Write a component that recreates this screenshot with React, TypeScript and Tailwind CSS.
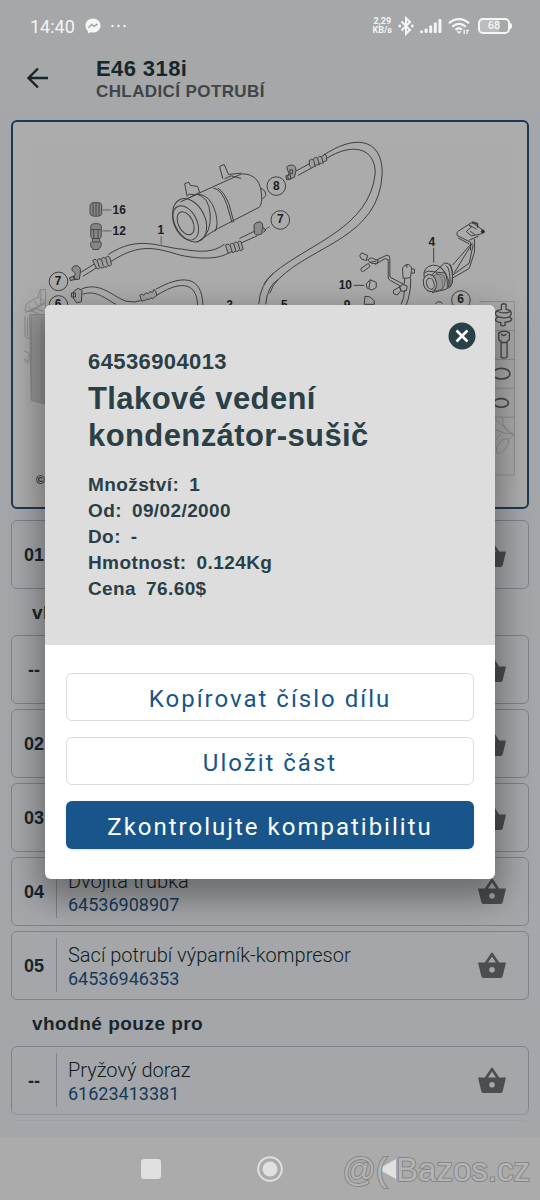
import type { ReactNode } from "react";

const helvetica = "font-['Liberation_Sans',Arial,sans-serif]";

function StatusBar() {
  return (
    <div className="flex h-13 items-center justify-between pl-[30px] pr-7 font-[Roboto,sans-serif] text-[#f4f5f5]">
      <div className="flex items-center gap-2.5">
        <span className="pt-0.5 text-lg leading-6">14:40</span>
        <svg className="h-4 w-4" viewBox="0 0 16 16" aria-hidden="true">
          <path d="M8 .5C3.700.5.5 3.600.5 7.700c0 2.200.9 4 2.400 5.300v2.400l2.300-1.200c.9.300 1.800.4 2.800.4 4.300 0 7.500-3.100 7.500-7.100S12.300.5 8 .5z" fill="currentColor" />
          <path d="M3.500 9.700 6.700 6.300l2.500 2L12.500 6" fill="none" stroke="#a5a7a9" strokeWidth="1.600" />
        </svg>
        <svg className="h-4 w-4" viewBox="0 0 16 16" fill="currentColor" aria-hidden="true">
          <circle cx="1.500" cy="8" r="1.200" />
          <circle cx="7.500" cy="8" r="1.200" />
          <circle cx="13.500" cy="8" r="1.200" />
        </svg>
      </div>
      <div className="flex items-center gap-1.5">
        <div className="text-center text-[9px] leading-[9px] font-bold">
          <div>2,29</div>
          <div>KB/s</div>
        </div>
        <svg className="h-5 w-4" viewBox="0 0 16 20" fill="none" stroke="currentColor" strokeWidth="2" aria-hidden="true">
          <path d="M3.500 5.500 12 14l-4 3.800V2.200L12 6l-8.500 8.500" />
          <circle cx="1.700" cy="10" r="1.400" fill="currentColor" stroke="none" />
          <circle cx="14.300" cy="10" r="1.400" fill="currentColor" stroke="none" />
        </svg>
        <svg className="h-4 w-[22px]" viewBox="0 0 22 16" fill="currentColor" aria-hidden="true">
          <rect x="0" y="12.500" width="3" height="2.500" rx="1" />
          <rect x="4.600" y="10.500" width="3" height="4.500" rx="1" />
          <rect x="9.200" y="7.500" width="3" height="7.500" rx="1" />
          <rect x="13.800" y="4.500" width="3" height="10.500" rx="1" />
          <rect x="18.400" y="1" width="3" height="14" rx="1" />
        </svg>
        <svg className="h-[18px] w-[22px]" viewBox="0 0 22 18" fill="none" stroke="currentColor" strokeWidth="2.300" aria-hidden="true">
          <path d="M1 6.300c5.700-5.600 14.300-5.600 20 0M4.300 9.700c3.900-3.800 9.500-3.800 13.400 0M7.500 13c2-2.100 4.500-2.100 6.500-.5" />
          <path d="M8.500 14.300h5L11 17z" fill="currentColor" stroke="none" />
          <path d="M16.200 12.500v4.500M19 17v-3.500h2" strokeWidth="1.300" />
        </svg>
        <div className="flex items-center pl-0.5">
          <div className="flex h-4 w-8 items-center justify-center rounded-[5px] border-2 border-current bg-linear-to-r from-white/25 from-68% to-transparent to-68% text-[11px] leading-3 font-medium">
            68
          </div>
          <div className="h-1.5 w-0.5 rounded-r-sm bg-current" />
        </div>
      </div>
    </div>
  );
}

function Header() {
  return (
    <header className="flex h-[58px] items-start pl-[26px]">
      <button type="button" aria-label="Zpět" className="mt-3.5 mr-[46px] text-[#17262b]">
        <svg className="h-6 w-6" viewBox="0 0 24 24" fill="none" stroke="currentColor" strokeWidth="2.400" aria-hidden="true">
          <path d="M22 12H3M12 2.500 2.500 12l9.500 9.500" />
        </svg>
      </button>
      <div className={`${helvetica} font-bold tracking-wide`}>
        <h1 className="pt-1 text-[22px] leading-[25px] text-[#17262b]">E46 318i</h1>
        <p className="text-[17px] leading-[22px] text-[#414547]">CHLADICÍ POTRUBÍ</p>
      </div>
    </header>
  );
}

function Diagram() {
  return (
    <svg className="block w-full" viewBox="12 122 516 386" role="img" aria-label="Chladicí potrubí">
      <rect x="24" y="139" width="492" height="355" fill="#ababab" />
      <g transform="translate(0 115) scale(.33333)" fill="none" stroke="#3f3f3f" strokeWidth="3" strokeLinejoin="round">
        <path d="M590 238 725 177q60 0 60 74 0 20-8 27L645 346" />
        <path d="M640 220q25 5 40 50l16 55M652 220q20 10 35 50l14 52" />
        <path d="M590 238q40 0 56 55 10 40-2 58" />
        <ellipse cx="568" cy="317" rx="46" ry="69" transform="rotate(-26 568 317)" />
        <ellipse cx="556" cy="325" rx="34" ry="55" transform="rotate(-26 556 325)" />
        <ellipse cx="556" cy="326" rx="22" ry="37" transform="rotate(-26 556 326)" />
        <path d="M565 250 590 238q36 10 40 60 4 55-30 80M540 262l50-24M590 383l55-37" />
        <path d="M560 243 553 207l12-5 5 10 22 3 6 18-12 8-20-3-6 8M668 192l-10-37 14-6 13 30 38-4M673 192l20-9 30 8" />
        <path d="m782 220 12 8 4 14-12 12" />
        <path d="M323 420C415 360 475 398 545 404c60 10 95 10 128-15M330 442c90-60 140-40 210-20 70 15 125 10 150-10" />
        <path d="M240 474l42-26M246 486l42-26M718 372l45-22M726 384l45-20" />
        <path d="M276 438q8-8 12 0 7-10 13-3 6-10 13-4 7-10 13-3l6 22q-6 8-11 3-4 9-11 4-6 7-12 2-6 8-12 2zM290 438l6 20M302 434l6 21M315 430l6 21M676 392q8-8 12 0 6-10 12-4 6-10 12-4 7-8 11-2l6 22q-8 8-12 2-5 8-12 4-6 8-12 2-6 6-10 2zM690 392l6 20M701 388l6 20M713 384l6 20" fill="#a0a0a0" />
        <path d="M213 466q2-14 16-12 12 4 10 18l-3 22-14 2-4-8 6-10zM206 490l14-5 3 10-14 4zM762 330q8-10 20-8 8 5 6 16l-3 20-14 4-8-6zM788 338l10 8-8 8" fill="#8c8c8c" />
        <path d="M798 342l12-6M482 365v25M305 286h28M305 349h28" strokeWidth="2" />
        <path d="M242 524C300 500 340 550 378 561q25 5 42-2M246 540c40-15 70 15 100 30M466 525c70-40 142-50 142 52M468 544c60-40 122-50 124 30" />
        <path d="M418 543q8-8 12 0 7-12 13-5 6-10 13-4l5-9q6 4 8 18l-6 5q-6 8-12 3-6 8-12 3-6 8-11 4-4 8-6-2zM218 532l14-10 12 6-2 34-14 4-10-14zM212 536h12v12h-12z" fill="#a0a0a0" />
        <path d="M268 273q0-10 18-10t17 10v24q0 8-17 8t-18-8zM277 265v38M286 265v38M295 265v38" fill="#858585" strokeWidth="2.500" />
        <path d="M270 335q0-8 16-8t16 8v28q0 7-5 9v8l5 5v8q-2 8-7 8v4h-19v-4q-6-2-6-8v-8l5-5v-8q-5-2-5-9zM271 345h30M275 372h22M274 382h26M279 345v28M292 345v28" fill="#858585" strokeWidth="2.500" />
        <circle cx="173" cy="501" r="28" />
        <circle cx="173" cy="572" r="28" />
        <circle cx="829" cy="214" r="28" />
        <circle cx="841" cy="316" r="28" />
        <path d="M776 570q4-60 45-94M797 570q5-55 38-75" />
      </g>
      <g transform="translate(270 115) scale(.33333)" fill="none" stroke="#3f3f3f" strokeWidth="3" strokeLinejoin="round">
        <path d="M160 122C250 60 338 65 338 175 330 370 130 390 25 495M168 132C250 80 317 100 317 175 300 340 120 385 11 476" />
        <path d="M76 170l42-23M84 182l42-23" />
        <path d="M118 137q8-7 12-2 6-12 13-5 5-10 12-4l11-9q6 5 5 20l-10 4q-5 8-11 4-6 9-12 5-7 8-13 9l-6-6zM131 135l6 22M143 130l6 21M155 126l6 20" fill="#a0a0a0" />
        <path d="M50 157q5-8 20-6 10 4 8 16l-4 20-18 8-3-9 4-10zM48 183l12-4 4 13-14 3zM60 165h8v12h-8z" fill="#969696" />
        <path d="m270 424 6-9 18 8-4 15-14-4zM294 436l10-6 22 8-4 10-18-2zM300 444l20-4M322 436l30-14q9 0 9 10v56l42 22M316 450l30-17 10 2v55q0 5 8 9l32 18M274 462l22-15 5 9-18 14q-10 5-9-8zM372 528l18-10 5 10-12 14-11-4zM390 518l8-8 15 5-2 14-15 2z" />
        <path d="M400 460q4-10 16-10 12 4 10 18l-3 22-22 2-2-28zM426 464h9v12h-9M406 492l-2 18M424 492q0 48-14 80M405 528q0 22-10 42M412 450v10" />
        <path d="M290 508l12-12 18 8v15l-12 8-16-6zM302 496l-4 26M286 546l16 2 12 12v10h-30zM498 568q12-12 22 0M252 513h32" />
        <path d="M493 400v45" />
        <path d="m550 452 52-60M555 475l55-90M548 492l52-30 16-50v-38" />
        <path d="M604 383 564 363q-5-10 4-14l30-19 24 14M592 352l15 12 30-6 6-10-28-20q-10-8-17 2l8 8-14 12zM603 350l14 10M600 377l28-12M604 384v24M566 370l34 18M550 482l50-36 12-56" />
        <ellipse cx="482" cy="506" rx="20" ry="26" transform="rotate(-15 482 506)" />
        <ellipse cx="483" cy="508" rx="11" ry="17" transform="rotate(-15 483 508)" />
        <path d="M464 488q-5-30 26-36 30-2 45 38 10 25-5 35l-42 10M500 475q25 15 20 50M485 484l40-38q25-5 25 46 0 30-20 30M530 453q15 10 12 65M540 447q14 15 8 60M512 458q25 20 22 60M464 476l12-6 50 6" />
        <path d="M492 484q20-10 32 0 10 20-6 42l-24 4q16-20-2-46z" fill="#8f8f8f" fillOpacity=".7" strokeWidth="2" />
        <circle cx="575" cy="557" r="28" />
        <circle cx="641" cy="351" r="5" fill="#222" />
        <path d="M608 322l16 5 2 12" strokeWidth="5" />
      </g>
      <path d="M278.300 280q-6 6-8.500 14M273.700 273.700q-5 4-10 11" fill="none" stroke="#3f3f3f" />
      <g transform="translate(0 290) scale(.33333)" fill="none" stroke="#888" strokeWidth="3">
        <path d="M86 76h50v270l-45-12z" fill="#979797" />
        <path d="M122 86v252M130 90v252M92 85v245M76 44l36-22 22 18-44 28-18-4zM72 70l30-14 25 10M82 50l10 15 36-25M112 20l5-18 17-2v60M120 0v50M72 80v62l14 8M80 85v55M70 185l14 8v25l-14-8M70 215l14 10M100 34l10 16M94 66l20 8" />
      </g>
      <g transform="translate(480 290) scale(.33333)" fill="none" stroke="#484848" strokeWidth="4">
        <path d="M0 37h106v522H0M0 124h106M0 211h106M0 298h106M0 385h106" stroke="#888" strokeWidth="2.500" />
        <path d="M67 46q7-5 14 0v14l13 4 3 9-6 10 7 6q0 8-20 10v9q-7 4-13 0v-8q-18-2-15-11l6-6-8-9 4-9 15-5zM57 82q18 8 36 0M54 66q20 10 42 0" />
        <path d="M59 131q16-10 32 0v20q-3 5-7 5v48q-8 6-18 0v-48q-7-1-7-6zM66 134q8 10 16 0M66 160h18" />
        <ellipse cx="67" cy="254" rx="26" ry="16" strokeWidth="5" />
        <ellipse cx="66" cy="342" rx="22" ry="13" strokeWidth="5" />
        <path d="M44 388 106 440M70 386q0 40 34 54M44 420l25 10q20 8 35 4M44 460l24-28M52 478q10-28 34-28 10 10-8 30-14 20-26 12zM86 456l18-18" stroke="#888" strokeWidth="2.500" />
      </g>
      <g className="font-['Liberation_Sans',Arial,sans-serif] text-[12px] font-bold" fill="#1d1d1d">
        <text x="112" y="214">16</text>
        <text x="112" y="235">12</text>
        <text x="157" y="234">1</text>
        <text x="54" y="286">7</text>
        <text x="54" y="309">6</text>
        <text x="273" y="190">8</text>
        <text x="277" y="223">7</text>
        <text x="429" y="246">4</text>
        <text x="339" y="290">10</text>
        <text x="458" y="304">6</text>
        <text x="226" y="310">2</text>
        <text x="281" y="310">5</text>
        <text x="344" y="310">9</text>
        <text x="35" y="485">©</text>
      </g>
    </svg>
  );
}

function Basket() {
  return (
    <svg className="h-[26px] w-7" viewBox="0 0 28 26" fill="#4b4d4e" aria-hidden="true">
      <path
        fillRule="evenodd"
        d="M0 10.500h6.800L13.200.9q.8-1 1.600 0l6.400 9.600H28l-3.300 13.800q-.4 1.700-2 1.700H5.300q-1.600 0-2-1.700zM10 10.500h8L14 4.400zM14 14.900a2.800 2.800 0 1 0 0 5.600 2.800 2.800 0 0 0 0-5.600z"
      />
    </svg>
  );
}

type Part = { position?: string; name?: string; number?: string };

function PartRow({ position, name, number }: Part) {
  return (
    <li className="flex h-[69px] items-center rounded-md border border-[#7c8389] pr-[22px]">
      <span className={`${helvetica} w-11 pt-0.5 text-center text-lg font-bold text-[#17262b]`}>{position}</span>
      <div className="flex h-[54px] min-w-0 flex-1 flex-col justify-center border-l border-[#7c8389] pt-1 pl-[11px] font-[Roboto,sans-serif]">
        {name && <span className="truncate text-xl leading-[26px] font-light text-[#101c20]">{name}</span>}
        {number && (
          <a href={`#${number}`} className="text-lg leading-[26px] text-[#153a5b]">
            {number}
          </a>
        )}
      </div>
      <button type="button" aria-label="Do košíku">
        <Basket />
      </button>
    </li>
  );
}

function GroupHeading({ children }: { children: ReactNode }) {
  return (
    <h2 className={`${helvetica} flex h-[46px] items-center pt-1 pl-[21px] text-[19px] font-bold tracking-wide text-[#17262b]`}>
      {children}
    </h2>
  );
}

const middleParts: Part[] = [
  { position: "--" },
  { position: "02" },
  { position: "03" },
  { position: "04", name: "Dvojitá trubka", number: "64536908907" },
  { position: "05", name: "Sací potrubí výparník-kompresor", number: "64536946353" },
];

const details = [
  ["Množství:", "1"],
  ["Od:", "09/02/2000"],
  ["Do:", "-"],
  ["Hmotnost:", "0.124Kg"],
  ["Cena", "76.60$"],
];

function PartDialog() {
  const outline =
    "h-12 rounded-md border border-[#dadcdf] bg-white pt-1 text-2xl leading-8 tracking-[2px] text-[#17558b]";
  return (
    <div className="absolute inset-0 flex items-center justify-center px-[45px] pb-4">
      <div
        role="dialog"
        aria-labelledby="part-name"
        className="relative w-full overflow-hidden rounded-md bg-white shadow-[0_14px_32px_6px_rgba(0,0,0,0.35)]"
      >
        <button type="button" aria-label="Zavřít" className="absolute top-[17px] right-[19px]">
          <svg className="h-7 w-7" viewBox="0 0 28 28" aria-hidden="true">
            <circle cx="14" cy="14" r="13.500" fill="#2b3f46" />
            <path d="m8.500 8.500 11 11m0-11-11 11" stroke="#fff" strokeWidth="2.600" />
          </svg>
        </button>
        <div className={`${helvetica} bg-[#dddddd] px-[43px] pt-[43px] pb-[43px] font-bold tracking-wide text-[#2b3f46]`}>
          <p className="text-[22px] leading-7">64536904013</p>
          <h2 id="part-name" className="mt-1 text-[31px] leading-[37px]">
            Tlakové vedení kondenzátor-sušič
          </h2>
          <dl className="mt-[18px] text-[19px] leading-[26px]">
            {details.map(([label, value]) => (
              <div key={label} className="flex gap-2.5">
                <dt>{label}</dt>
                <dd>{value}</dd>
              </div>
            ))}
          </dl>
        </div>
        <div className="flex flex-col gap-4 px-[21px] pt-7 pb-[30px] font-[Roboto,sans-serif]">
          <button type="button" className={outline}>Kopírovat číslo dílu</button>
          <button type="button" className={outline}>Uložit část</button>
          <button type="button" className="h-12 rounded-md bg-[#17558b] pt-1 text-2xl leading-8 tracking-[2px] text-white shadow">
            Zkontrolujte kompatibilitu
          </button>
        </div>
      </div>
    </div>
  );
}

function NavigationBar() {
  return (
    <nav className="relative flex h-[63px] items-center justify-center bg-[#ababab] text-[#e0e0e0]">
      <div className="flex items-center gap-24">
        <button type="button" aria-label="Poslední aplikace" className="h-5 w-5 rounded-[3px] bg-current" />
        <button type="button" aria-label="Domů">
          <svg className="h-[26px] w-[26px]" viewBox="0 0 26 26" aria-hidden="true">
            <circle cx="13" cy="13" r="11.800" fill="none" stroke="currentColor" strokeWidth="2" />
            <circle cx="13" cy="13" r="7.500" fill="currentColor" />
          </svg>
        </button>
        <button type="button" aria-label="Zpět">
          <svg className="h-5 w-5" viewBox="0 0 20 20" fill="currentColor" aria-hidden="true">
            <path d="M17 0v20L1 11q-1-1 0-2z" />
          </svg>
        </button>
      </div>
      <span
        className={`${helvetica} absolute right-2.5 bottom-2.5 text-[33px] leading-10 whitespace-pre text-[#b4b4b4] [-webkit-text-stroke:2px_#868686] [paint-order:stroke_fill]`}
      >
        @( Bazos.cz
      </span>
    </nav>
  );
}

export default function App() {
  return (
    <div className="relative flex h-screen flex-col overflow-hidden bg-[#a5a7a9]">
      <StatusBar />
      <Header />
      <main className="relative min-h-0 flex-1 overflow-hidden bg-[#a4a6a9] px-[11px] pt-2.5">
        <div className="mb-[11px] overflow-hidden rounded-md border-2 border-[#1b3a56] bg-[#acacac]">
          <Diagram />
        </div>
        <ul>
          <PartRow position="01" />
        </ul>
        <GroupHeading>vhodné pouze pro</GroupHeading>
        <ul className="flex flex-col gap-[5px]">
          {middleParts.map((part) => (
            <PartRow key={part.position} {...part} />
          ))}
        </ul>
        <GroupHeading>vhodné pouze pro</GroupHeading>
        <ul className="flex flex-col gap-[5px]">
          <PartRow position="--" name="Pryžový doraz" number="61623413381" />
          <PartRow />
        </ul>
        <div className="absolute inset-x-0 bottom-0 h-8 bg-linear-to-t from-[#a4a6a9] from-40% to-transparent" />
      </main>
      <NavigationBar />
      <PartDialog />
    </div>
  );
}
